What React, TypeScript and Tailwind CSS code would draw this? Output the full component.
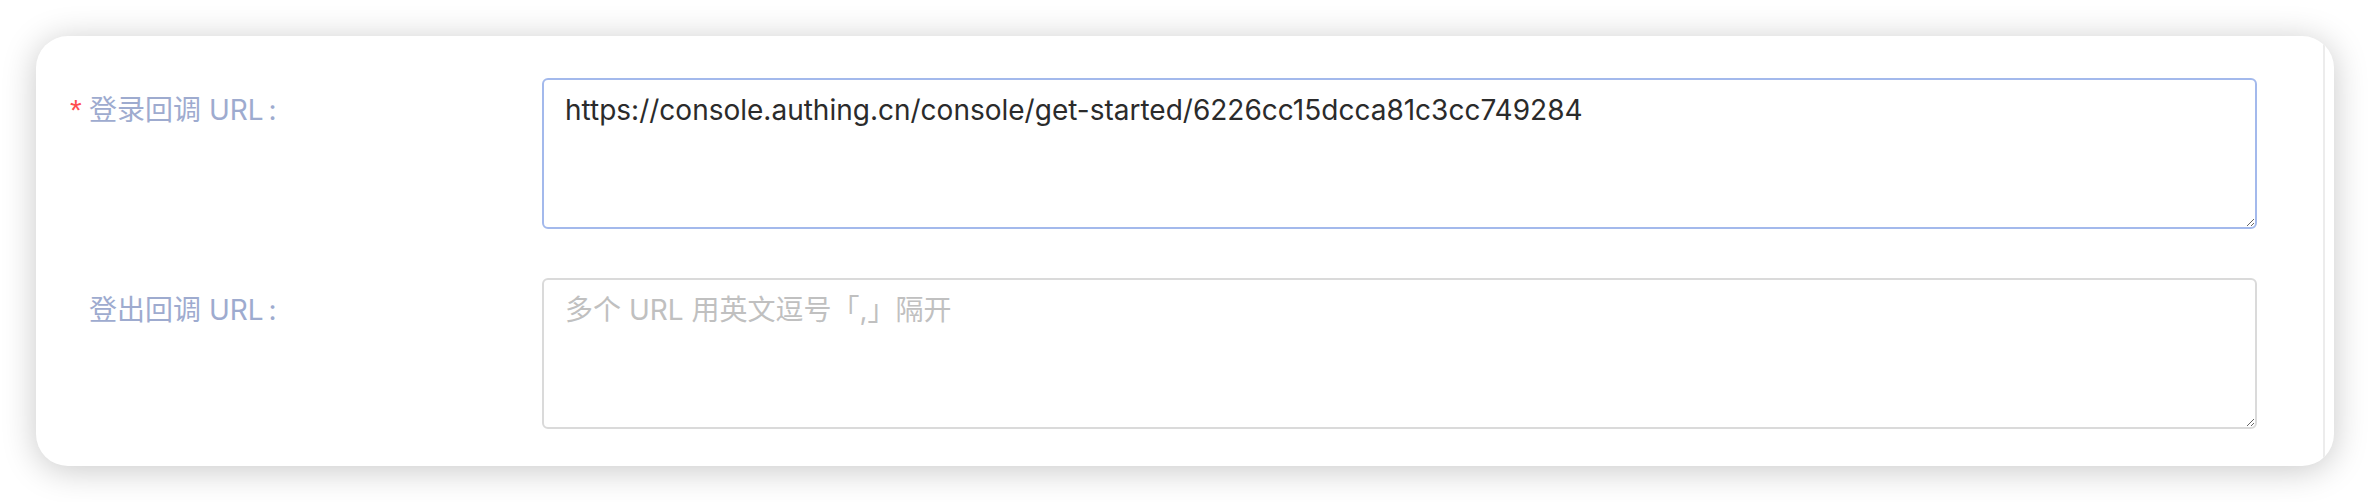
import { useState } from "react";

const font = { fontFamily: 'Inter, "Noto Sans CJK SC", sans-serif' };

function Row({
  label,
  required,
  value,
  placeholder,
  active,
  onChange,
}: {
  label: string;
  required?: boolean;
  value: string;
  placeholder?: string;
  active?: boolean;
  onChange: (v: string) => void;
}) {
  return (
    <div className="flex items-start">
      <div className="flex w-[472px] shrink-0 pt-[10px] text-[28px] leading-[44px] text-[#9eabcf]">
        <span
          className="w-[19px] shrink-0 text-[30px] text-[#ff4d4f]"
          style={{ fontFamily: '"Liberation Sans", sans-serif' }}
        >
          {required ? "*" : ""}
        </span>
        <span>
          {label} URL<span className="ml-[5px]">:</span>
        </span>
      </div>
      <textarea
        value={value}
        placeholder={placeholder}
        onChange={(e) => onChange(e.target.value)}
        className={`h-[151px] flex-1 rounded-[6px] border-2 bg-white px-[21px] py-[8px] text-[28px] leading-[44px] text-[#2b2b2b] outline-none placeholder:text-[#c0c0c0] ${
          active ? "border-[#a3b9ec]" : "border-[#dadada]"
        }`}
        style={font}
      />
    </div>
  );
}

export default function App() {
  const [login, setLogin] = useState("https://console.authing.cn/console/get-started/6226cc15dcca81c3cc749284");
  const [logout, setLogout] = useState("");

  return (
    <div className="min-h-screen bg-white p-[36px]" style={font}>
      <div className="flex h-[430px] overflow-hidden rounded-[32px] bg-white shadow-[0_4px_34px_rgba(0,0,0,0.22)]">
        <div className="flex flex-1 flex-col gap-[49px] pl-[34px] pr-[66px] pt-[42px]">
          <Row label="登录回调" required value={login} onChange={setLogin} active />
          <Row label="登出回调" value={logout} placeholder="多个 URL 用英文逗号「,」隔开" onChange={setLogout} />
        </div>
        <div className="w-[11px] shrink-0 border-l-2 border-[#ececec]" />
      </div>
    </div>
  );
}
